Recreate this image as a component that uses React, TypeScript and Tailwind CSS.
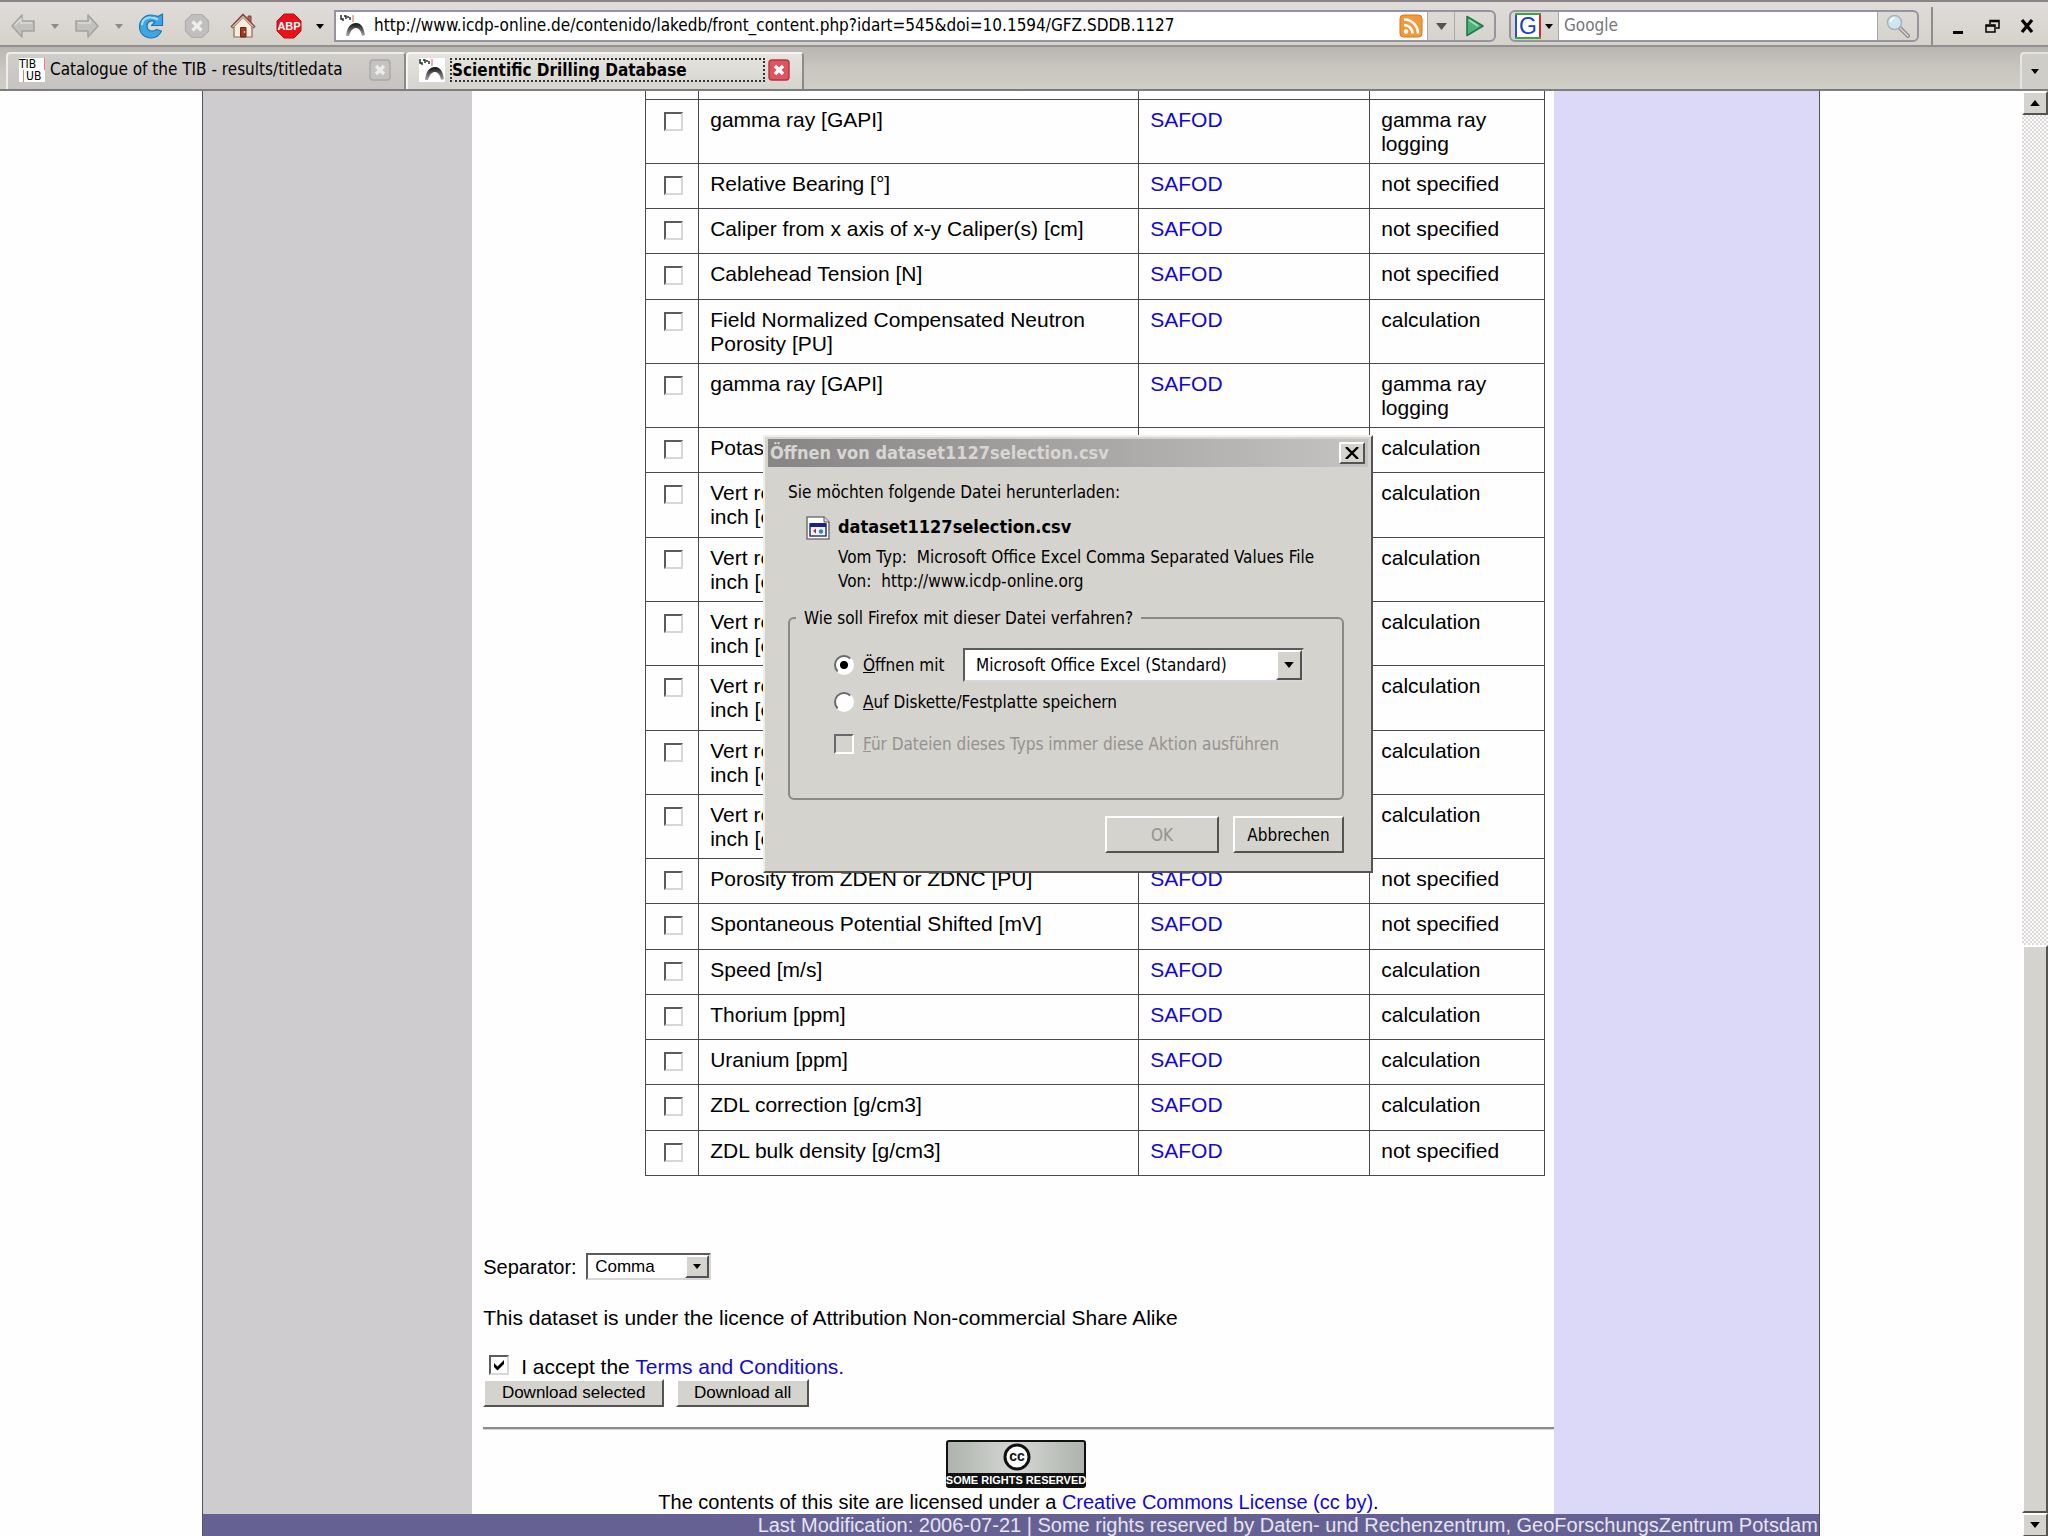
import React, { useId } from "react";

type Row = { name: string; method: string };

const rows: Row[] = [
  { name: "gamma ray [GAPI]", method: "gamma ray logging" },
  { name: "Relative Bearing [°]", method: "not specified" },
  { name: "Caliper from x axis of x-y Caliper(s) [cm]", method: "not specified" },
  { name: "Cablehead Tension [N]", method: "not specified" },
  { name: "Field Normalized Compensated Neutron Porosity [PU]", method: "calculation" },
  { name: "gamma ray [GAPI]", method: "gamma ray logging" },
  { name: "Potassium [%]", method: "calculation" },
  { name: "Vert res match resistivity 10\ninch [ohmm]", method: "calculation" },
  { name: "Vert res match resistivity 20\ninch [ohmm]", method: "calculation" },
  { name: "Vert res match resistivity 30\ninch [ohmm]", method: "calculation" },
  { name: "Vert res match resistivity 60\ninch [ohmm]", method: "calculation" },
  { name: "Vert res match resistivity 90\ninch [ohmm]", method: "calculation" },
  { name: "Vert res match resistivity 120\ninch [ohmm]", method: "calculation" },
  { name: "Porosity from ZDEN or ZDNC [PU]", method: "not specified" },
  { name: "Spontaneous Potential Shifted [mV]", method: "not specified" },
  { name: "Speed [m/s]", method: "calculation" },
  { name: "Thorium [ppm]", method: "calculation" },
  { name: "Uranium [ppm]", method: "calculation" },
  { name: "ZDL correction [g/cm3]", method: "calculation" },
  { name: "ZDL bulk density [g/cm3]", method: "not specified" },
];

const raised =
  "border-2 border-t-white border-l-white border-r-[#55534f] border-b-[#55534f] bg-[#d5d3cd]";

function Caret({ className }: { className: string }) {
  return (
    <svg viewBox="0 0 8 5" className={className} fill="currentColor" aria-hidden="true">
      <path d="M0 0h8L4 5z" />
    </svg>
  );
}

function IcdpIcon() {
  return (
    <svg viewBox="0 0 26 24" className="h-6 w-[26px] shrink-0" aria-hidden="true">
      <defs>
        <linearGradient id="arch" x1="0" x2="0" y1="0" y2="1">
          <stop offset="0" stopColor="#111" />
          <stop offset="1" stopColor="#aaa" />
        </linearGradient>
      </defs>
      <rect width="26" height="24" fill="#fff" />
      <path d="M1 1v4h2v2M4 2h2v3M8 2v2M10 3v3" fill="none" stroke="#222" strokeWidth="1.4" />
      <path d="M13 1v7" stroke="#e06060" strokeWidth="1" />
      <path d="M6 22c1-8 4-13 10-13s8 6 9 12l-3 1c-1-5-3-8-6-8s-5 2-7 8z" fill="url(#arch)" />
    </svg>
  );
}

function ArrowIcon({ flip }: { flip?: boolean }) {
  return (
    <svg viewBox="0 0 26 26" className="h-[26px] w-[26px]" aria-hidden="true">
      <path
        d={flip ? "M24 13L14 2v6H2v10h12v6z" : "M2 13L12 2v6h12v10H12v6z"}
        fill="#c3c1be"
        stroke="#a5a3a1"
        strokeWidth="1.600"
        strokeLinejoin="round"
      />
      <path d={flip ? "M4 10h12V7" : "M5 12l6-6v4h11"} fill="none" stroke="#dcdad7" strokeWidth="1.500" />
    </svg>
  );
}

function ReloadIcon() {
  return (
    <svg viewBox="0 0 26 26" className="h-[26px] w-[26px]" aria-hidden="true">
      <path
        d="M20 3.500L24.500 1v11.500H13.500l3.500-3.500c-3.500-2.500-8-.5-8 4s5 7 9.500 3.500l5 1.500C21 23 17.500 25 13 25 6 25 1.500 20 1.500 13.500S7 2 12.500 2c3 0 5.500.5 7.500 1.500z"
        fill="#3fa6e2"
        stroke="#1b76b8"
        strokeWidth="1.200"
        strokeLinejoin="round"
      />
      <path d="M4 12c0-5 4-8 9-7.500 3 0 5 1 7 2" fill="none" stroke="#a9dcf8" strokeWidth="2" />
    </svg>
  );
}

function StopIcon() {
  return (
    <svg viewBox="0 0 26 26" className="h-[26px] w-[26px]" aria-hidden="true">
      <path d="M8 1.500h10L24.500 8v10L18 24.500H8L1.500 18V8z" fill="#c0bfbd" stroke="#b0aeac" strokeWidth="1.200" />
      <path d="M8.500 8.500l9 9M17.500 8.500l-9 9" stroke="#efeeec" strokeWidth="3.200" />
    </svg>
  );
}

function HomeIcon() {
  return (
    <svg viewBox="0 0 26 26" className="h-[26px] w-[26px]" aria-hidden="true">
      <path d="M18 3h3v7h-3z" fill="#c85a50" stroke="#8a4038" />
      <path d="M4 13L13 4l9 9v11H4z" fill="#f6ecdc" stroke="#8b6a58" strokeWidth="1.200" />
      <path d="M1.500 14.500L13 2.500l11.500 12" fill="none" stroke="#7b4d42" strokeWidth="3" />
      <path d="M2.500 14L13 3.500 23.500 14" fill="none" stroke="#e6bfae" strokeWidth="1.200" />
      <path d="M10.500 14.500h5.500V24h-5.500z" fill="#a5381f" stroke="#6e2414" />
      <circle cx="14.500" cy="19" r=".9" fill="#f2d060" />
    </svg>
  );
}

function AbpIcon() {
  return (
    <svg viewBox="0 0 26 26" className="h-[26px] w-[26px]" role="img" aria-label="ABP">
      <path d="M8 1h10l7 7v10l-7 7H8l-7-7V8z" fill="#e8121a" stroke="#b80d12" />
      <text x="13" y="17" textAnchor="middle" fontSize="11" fontWeight="700" fill="#fff" fontFamily="Liberation Sans, sans-serif">
        ABP
      </text>
    </svg>
  );
}

function FeedIcon() {
  return (
    <svg viewBox="0 0 24 24" className="h-6 w-6" aria-hidden="true">
      <rect x="1" y="1" width="22" height="22" rx="3.500" fill="#f19a3c" stroke="#d9791c" />
      <circle cx="7" cy="17.500" r="2.200" fill="#fff" />
      <path d="M5 11a8.500 8.500 0 018.500 8.500M5 5.500a14 14 0 0114 14" fill="none" stroke="#fff" strokeWidth="2.600" />
    </svg>
  );
}

function GoIcon() {
  return (
    <svg viewBox="0 0 20 22" className="h-[22px] w-5" aria-hidden="true">
      <path d="M2 1.500l16 9.500L2 20.500z" fill="#4fb27b" stroke="#1f7a48" strokeWidth="1.600" strokeLinejoin="round" />
      <path d="M4 5l9 6" stroke="#a8e0bf" strokeWidth="1.600" />
    </svg>
  );
}

function GoogleIcon() {
  return (
    <svg viewBox="0 0 26 26" className="h-[26px] w-[26px]" role="img" aria-label="Google">
      <rect width="26" height="26" fill="#fff" />
      <path d="M1 25V1" stroke="#2b50c8" strokeWidth="2" />
      <path d="M0 1h26M0 25h26" stroke="#3fa345" strokeWidth="2" />
      <path d="M25 2v22" stroke="#d8262c" strokeWidth="2" />
      <text x="13" y="21" textAnchor="middle" fontSize="23" fill="#1a3fc0" fontFamily="Liberation Sans, sans-serif">
        G
      </text>
    </svg>
  );
}

function MagnifierIcon() {
  return (
    <svg viewBox="0 0 26 24" className="h-6 w-[26px]" aria-hidden="true">
      <path d="M14 13l9 9" stroke="#8d8b89" strokeWidth="4" strokeLinecap="round" />
      <path d="M15 14l8 8" stroke="#d8d6d4" strokeWidth="1.600" strokeLinecap="round" />
      <circle cx="9.500" cy="8.500" r="7" fill="#cfe6f1" stroke="#a3b4bd" strokeWidth="1.600" />
      <path d="M5.500 8a4 4 0 014-4" fill="none" stroke="#fff" strokeWidth="2" />
    </svg>
  );
}

function TabClose({ active }: { active?: boolean }) {
  return (
    <button aria-label="Close tab" className="shrink-0">
      <svg viewBox="0 0 22 22" className="h-[22px] w-[22px]" aria-hidden="true">
        <rect
          x="1"
          y="1"
          width="20"
          height="20"
          rx="3"
          fill={active ? "#dc5560" : "#c5c3c1"}
          stroke={active ? "#b8323f" : "#aaa8a6"}
          strokeWidth="1.400"
        />
        <path d="M7 7l8 8M15 7l-8 8" stroke={active ? "#fff" : "#efedeb"} strokeWidth="3.400" />
      </svg>
    </button>
  );
}

function Toolbar() {
  return (
    <div className="flex h-[47px] items-center border-t-2 border-b-2 border-t-[#8a8486] border-b-[#918f8f] bg-linear-to-b from-[#e0dcda] to-[#d5d2ca] pt-[5px]">
      <nav className="flex shrink-0 items-center pl-[10px]">
        <button aria-label="Back"><ArrowIcon /></button>
        <button aria-label="Back history" className="ml-[15px] text-[#8d8b89]"><Caret className="h-[5px] w-2" /></button>
        <button aria-label="Forward" className="ml-[15px]"><ArrowIcon flip /></button>
        <button aria-label="Forward history" className="ml-[15px] text-[#8d8b89]"><Caret className="h-[5px] w-2" /></button>
        <button aria-label="Reload" className="ml-[15px]"><ReloadIcon /></button>
        <button aria-label="Stop" className="ml-5"><StopIcon /></button>
        <button aria-label="Home" className="ml-5"><HomeIcon /></button>
        <button aria-label="Adblock Plus" className="ml-5"><AbpIcon /></button>
        <button aria-label="Adblock menu" className="ml-[14px]"><Caret className="h-[5px] w-2" /></button>
      </nav>
      <div className="ml-[10px] flex h-8 min-w-0 flex-1 items-stretch overflow-hidden rounded-r-md border-2 border-[#9693a0]">
        <div className="flex min-w-0 flex-1 items-center gap-2 bg-white pr-1 pl-1">
          <IcdpIcon />
          <input
            aria-label="Address"
            className="min-w-0 flex-1 bg-transparent text-[17px] outline-none"
            defaultValue="http://www.icdp-online.de/contenido/lakedb/front_content.php?idart=545&doi=10.1594/GFZ.SDDB.1127"
          />
          <FeedIcon />
        </div>
        <button aria-label="Address history" className="flex w-[27px] items-center justify-center border-l border-[#a9a7a9] text-[#55534f]">
          <Caret className="h-[7px] w-[11px]" />
        </button>
        <button aria-label="Go" className="flex w-10 items-center justify-center border-l border-[#a9a7a9]">
          <GoIcon />
        </button>
      </div>
      <div className="ml-[13px] flex h-8 w-[410px] shrink-0 items-stretch overflow-hidden rounded-md border-2 border-[#9693a0]">
        <button aria-label="Search engine" className="flex w-12 items-center justify-between border-r border-[#a9a7a9] pr-[5px] pl-1">
          <GoogleIcon />
          <Caret className="h-[5px] w-2" />
        </button>
        <input aria-label="Search" placeholder="Google" className="min-w-0 flex-1 bg-white pl-[5px] text-[17px] outline-none placeholder:text-[#77757a]" />
        <button aria-label="Start search" className="flex w-10 items-center justify-center border-l border-[#a9a7a9]">
          <MagnifierIcon />
        </button>
      </div>
      <div className="ml-3 flex h-full w-[117px] shrink-0 items-center justify-between border-l-2 border-[#8f8c8e] pr-[14px] pl-5">
        <button aria-label="Minimize" className="flex h-4 w-3 items-end"><span className="h-[3px] w-[10px] bg-black" /></button>
        <button aria-label="Restore">
          <svg viewBox="0 0 15 14" className="h-[14px] w-[15px]" fill="none" stroke="#000" strokeWidth="1.500">
            <path d="M5 5V1.500h9V9h-3M5 2.500h9M1 6h9v7H1zM1 7h9" />
          </svg>
        </button>
        <button aria-label="Close window">
          <svg viewBox="0 0 14 14" className="h-[14px] w-[14px]" stroke="#000" strokeWidth="3.200">
            <path d="M2 1l10 12M12 1L2 13" />
          </svg>
        </button>
      </div>
    </div>
  );
}

function TabBar() {
  return (
    <div className="flex h-11 items-stretch border-b-2 border-[#7f7d7b] bg-linear-to-b from-[#b9b5b1] via-[#c9c6bf] to-[#d0cec6] pt-[5px]">
      <div className="ml-[6px] flex w-[400px] items-center rounded-t border-2 border-b-0 border-[#efedea] border-r-[#8d8b88] bg-linear-to-b from-[#d0cecb] to-[#c6c3c0] pr-[13px] pb-[3px] pl-[11px]">
        <span className="flex h-6 w-[26px] shrink-0 flex-col bg-white text-[12px] leading-3">
          <span className="border-r border-[#e08080]">TIB</span>
          <span className="ml-1 border-l border-[#e08080] pl-[2px]">UB</span>
        </span>
        <button className="ml-[5px] min-w-0 flex-1 text-left text-[17px] whitespace-nowrap">Catalogue of the TIB - results/titledata</button>
        <TabClose />
      </div>
      <div className="flex w-[398px] items-center rounded-t border-2 border-b-0 border-[#f6f5f2] border-r-[#8d8b88] bg-linear-to-b from-[#e6e4e0] to-[#d6d4ce] pr-3 pb-[3px] pl-[11px]">
        <IcdpIcon />
        <button className="mr-[3px] ml-[5px] h-6 min-w-0 flex-1 border-2 border-dotted border-[#333] text-left text-[17px] leading-5 font-bold whitespace-nowrap">
          Scientific Drilling Database
        </button>
        <TabClose active />
      </div>
      <div className="flex-1" />
      <button aria-label="List all tabs" className="flex w-7 items-center justify-center rounded-tl border-t-2 border-l-2 border-[#e6e4e0] bg-[#cfcdc8]">
        <Caret className="h-[5px] w-2" />
      </button>
    </div>
  );
}

function Scrollbar() {
  return (
    <div className="flex w-[26px] shrink-0 flex-col bg-[repeating-conic-gradient(#dcd9d8_0_25%,#fbfafa_0_50%)] bg-size-[4px_4px]">
      <button aria-label="Scroll up" className={`flex h-6 items-center justify-center ${raised}`}>
        <Caret className="h-[6px] w-3 rotate-180" />
      </button>
      <div className="grow-[832]" />
      <div className={`grow-[565] ${raised}`} />
      <button aria-label="Scroll down" className={`flex h-6 items-center justify-center ${raised}`}>
        <Caret className="h-[6px] w-3" />
      </button>
    </div>
  );
}

const box =
  "appearance-none border-2 border-t-[#5c5a5c] border-l-[#5c5a5c] border-r-[#d8d6d8] border-b-[#d8d6d8] bg-white";

const cell = "border border-[#4a484a] px-[11px] pt-2 pb-[7px]";

function DataTable() {
  return (
    <div className="pr-[9px] pl-[173px]">
      <table className="h-[1085px] w-full table-fixed border-collapse">
        <colgroup>
          <col className="w-[53px]" />
          <col className="w-[440px]" />
          <col className="w-[231px]" />
          <col />
        </colgroup>
        <tbody>
          <tr className="h-2">
            {[0, 1, 2, 3].map((i) => (
              <td key={i} className="border border-t-0 border-[#4a484a] p-0" />
            ))}
          </tr>
          {rows.map((r, i) => (
            <tr key={i} className="h-[45px] align-top">
              <td className="border border-[#4a484a] pt-3 pr-0 pb-0 pl-[2px] text-center leading-[0]">
                <input type="checkbox" aria-label={r.name} className={`h-[19px] w-[19px] ${box}`} />
              </td>
              <td className={`whitespace-pre-line ${cell}`}>{r.name}</td>
              <td className={cell}>
                <a href="#safod" className="text-[#1208d4]">SAFOD</a>
              </td>
              <td className={cell}>{r.method}</td>
            </tr>
          ))}
        </tbody>
      </table>
    </div>
  );
}

function CcBadge() {
  return (
    <svg viewBox="0 0 140 48" className="inline h-12 w-[140px]" role="img" aria-label="Some rights reserved">
      <defs>
        <linearGradient id="badge" x1="0" x2="1">
          <stop offset="0" stopColor="#aeb3ad" />
          <stop offset=".5" stopColor="#d4d6d3" />
          <stop offset="1" stopColor="#aeb3ad" />
        </linearGradient>
      </defs>
      <rect x="1" y="1" width="138" height="46" rx="2" fill="url(#badge)" stroke="#111" strokeWidth="2" />
      <rect x="1" y="33" width="138" height="14" fill="#111" />
      <circle cx="71" cy="17" r="12" fill="#fff" stroke="#111" strokeWidth="3" />
      <text x="71" y="21" textAnchor="middle" fontSize="14" fontWeight="700" fill="#111" fontFamily="Liberation Sans, sans-serif">cc</text>
      <text x="70" y="44" textAnchor="middle" fontSize="11" fontWeight="700" fill="#fff" fontFamily="Liberation Sans Narrow, Liberation Sans, sans-serif">SOME RIGHTS RESERVED</text>
    </svg>
  );
}

function DownloadForm() {
  const sep = useId();
  const accept = useId();
  return (
    <div className="pl-[11px]">
      <div className="flex items-center pt-[77px]">
        <label htmlFor={sep} className="w-[95px] text-[20px]">Separator:</label>
        <span className="relative ml-2 flex">
          <select id={sep} className={`h-[27px] w-[125px] pl-[7px] text-[17px] ${box}`}>
            <option>Comma</option>
          </select>
          <span className={`pointer-events-none absolute top-[2px] right-[2px] flex h-[23px] w-6 items-center justify-center ${raised}`}>
            <Caret className="h-[5px] w-2" />
          </span>
        </span>
      </div>
      <p className="mt-[26px]">This dataset is under the licence of Attribution Non-commercial Share Alike</p>
      <div className="mt-[25px] flex items-start pl-[6px]">
        <span className="relative mr-3 flex">
          <input id={accept} type="checkbox" defaultChecked className={`h-5 w-5 ${box}`} />
          <svg viewBox="0 0 20 20" className="pointer-events-none absolute inset-0 h-5 w-5" fill="#000">
            <path d="M5 8v4l3.500 3.500L15 9V5l-6.500 6.500z" />
          </svg>
        </span>
        <label htmlFor={accept}>
          I accept the <a href="#terms" className="text-[#1208d4]">Terms and Conditions.</a>
        </label>
      </div>
      <div className="flex gap-3">
        <button className={`h-7 w-[181px] text-[17px] leading-6 ${raised}`}>Download selected</button>
        <button className={`h-7 w-[133px] text-[17px] leading-6 ${raised}`}>Download all</button>
      </div>
      <hr className="mt-5 border-t-2 border-b border-t-[#8e8c8e] border-b-[#d8d6d8]" />
      <div className="pt-[10px] text-center text-[20px] whitespace-nowrap">
        <p><CcBadge />&nbsp;</p>
        <p className="mt-[2px]">
          The contents of this site are licensed under a <a href="#cc" className="text-[#1208d4]">Creative Commons License (cc by)</a>.
        </p>
      </div>
    </div>
  );
}

const radio =
  "h-5 w-5 shrink-0 appearance-none rounded-full border-2 border-t-[#6a686a] border-l-[#6a686a] border-r-white border-b-white bg-white checked:bg-radial checked:from-black checked:from-30% checked:to-white checked:to-40%";

function DownloadDialog() {
  const open = useId();
  const save = useId();
  const always = useId();
  return (
    <div
      role="dialog"
      aria-labelledby="dialog-title"
      className="absolute top-[344px] left-[763px] w-[610px] border-2 border-t-[#f0eeea] border-r-[#55534f] border-b-[#55534f] border-l-[#f0eeea] bg-[#d5d3cd] p-[3px] pt-[2px] pb-[18px] font-['DejaVu_Sans_Condensed','DejaVu_Sans',sans-serif] text-[17px] leading-6"
    >
      <div className="flex h-7 items-center justify-between bg-linear-to-r from-[#868484] to-[#c6c3c3] pr-[3px] pl-[2px]">
        <h2 id="dialog-title" className="text-[18px] font-bold text-[#d8d6d2]">Öffnen von dataset1127selection.csv</h2>
        <button aria-label="Schließen" className={`flex h-[22px] w-[26px] items-center justify-center ${raised}`}>
          <svg viewBox="0 0 14 12" className="h-3 w-[14px]" stroke="#000" strokeWidth="2.400"><path d="M1 0l12 12M13 0L1 12" /></svg>
        </button>
      </div>
      <div className="pt-[13px] pr-6 pl-5">
        <p>Sie möchten folgende Datei herunterladen:</p>
        <div className="mt-[11px] flex pl-[18px]">
          <svg viewBox="0 0 24 24" className="mt-[1px] h-6 w-6 shrink-0" aria-hidden="true">
            <path d="M1 1h17l5 5v17H1z" fill="#fff" stroke="#777" strokeWidth="1.600" />
            <path d="M18 1v5h5" fill="#ddd" stroke="#555" />
            <path d="M4 8h16v12H4z" fill="#f4f4fa" stroke="#333a80" strokeWidth="1.600" />
            <path d="M4 7h16v4H4z" fill="#1c1f8f" />
            <path d="M7 15l3-2.500v5z" fill="#d02a20" />
            <circle cx="15" cy="15.500" r="2.200" fill="#2f86b8" />
          </svg>
          <div className="ml-2">
            <p className="text-[18px] font-bold">dataset1127selection.csv</p>
            <dl className="mt-[6px] grid">
              <div className="flex gap-[10px]"><dt>Vom Typ:</dt><dd>Microsoft Office Excel Comma Separated Values File</dd></div>
              <div className="flex gap-[10px]"><dt>Von:</dt><dd>http://www.icdp-online.org</dd></div>
            </dl>
          </div>
        </div>
        <fieldset className="mt-[13px] h-[194px] rounded-md border-2 border-[#8b8986] pl-11">
          <legend className="-ml-[38px] px-2">Wie soll Firefox mit dieser Datei verfahren?</legend>
          <div className="mt-[18px] flex items-center">
            <input id={open} type="radio" name="action" defaultChecked className={radio} />
            <label htmlFor={open} className="ml-[9px] w-[100px]"><u>Ö</u>ffnen mit</label>
            <span className="relative flex">
              <select aria-label="Programm" className={`h-[34px] w-[341px] pl-[11px] text-[17px] ${box}`}>
                <option>Microsoft Office Excel (Standard)</option>
              </select>
              <span className={`pointer-events-none absolute top-[2px] right-[2px] flex h-[30px] w-[26px] items-center justify-center ${raised}`}>
                <Caret className="h-[6px] w-3" />
              </span>
            </span>
          </div>
          <div className="mt-2 flex items-center">
            <input id={save} type="radio" name="action" className={radio} />
            <label htmlFor={save} className="ml-[9px]"><u>A</u>uf Diskette/Festplatte speichern</label>
          </div>
          <div className="mt-[18px] flex items-center text-[#94928f]">
            <input id={always} type="checkbox" disabled className="h-5 w-5 appearance-none border-2 border-t-[#6a686a] border-r-white border-b-white border-l-[#6a686a] bg-[#d5d3cd]" />
            <label htmlFor={always} className="ml-[9px]"><u>F</u>ür Dateien dieses Typs immer diese Aktion ausführen</label>
          </div>
        </fieldset>
        <div className="mt-4 flex justify-end gap-[14px]">
          <button disabled className={`h-[37px] w-[114px] text-[#94928f] ${raised}`}>OK</button>
          <button className={`h-[37px] w-[111px] ${raised}`}>Abbrechen</button>
        </div>
      </div>
    </div>
  );
}

export default function App() {
  return (
    <div className="flex min-h-screen flex-col bg-white font-['DejaVu_Sans_Condensed','DejaVu_Sans',sans-serif] text-black">
      <Toolbar />
      <TabBar />
      <div className="relative flex flex-1 items-stretch">
        <main className="flex flex-1 flex-col bg-[#fefefe] font-['Liberation_Sans',Arial,sans-serif] text-[21px] leading-6">
          <div className="mx-auto flex w-4/5 flex-1 flex-col border-x border-[#55535a]">
            <div className="flex flex-1">
              <aside className="w-[269px] shrink-0 bg-[#cfcccf]" />
              <div className="min-w-0 flex-1">
                <DataTable />
                <DownloadForm />
              </div>
              <aside className="w-[265px] shrink-0 bg-[#dcd8f8]" />
            </div>
            <footer className="bg-[#666193] pr-px text-right text-[20px] leading-[23px] text-[#e6e4f4]">
              Last Modification: 2006-07-21 | Some rights reserved by Daten- und Rechenzentrum, GeoForschungsZentrum Potsdam
            </footer>
          </div>
        </main>
        <Scrollbar />
        <DownloadDialog />
      </div>
    </div>
  );
}
